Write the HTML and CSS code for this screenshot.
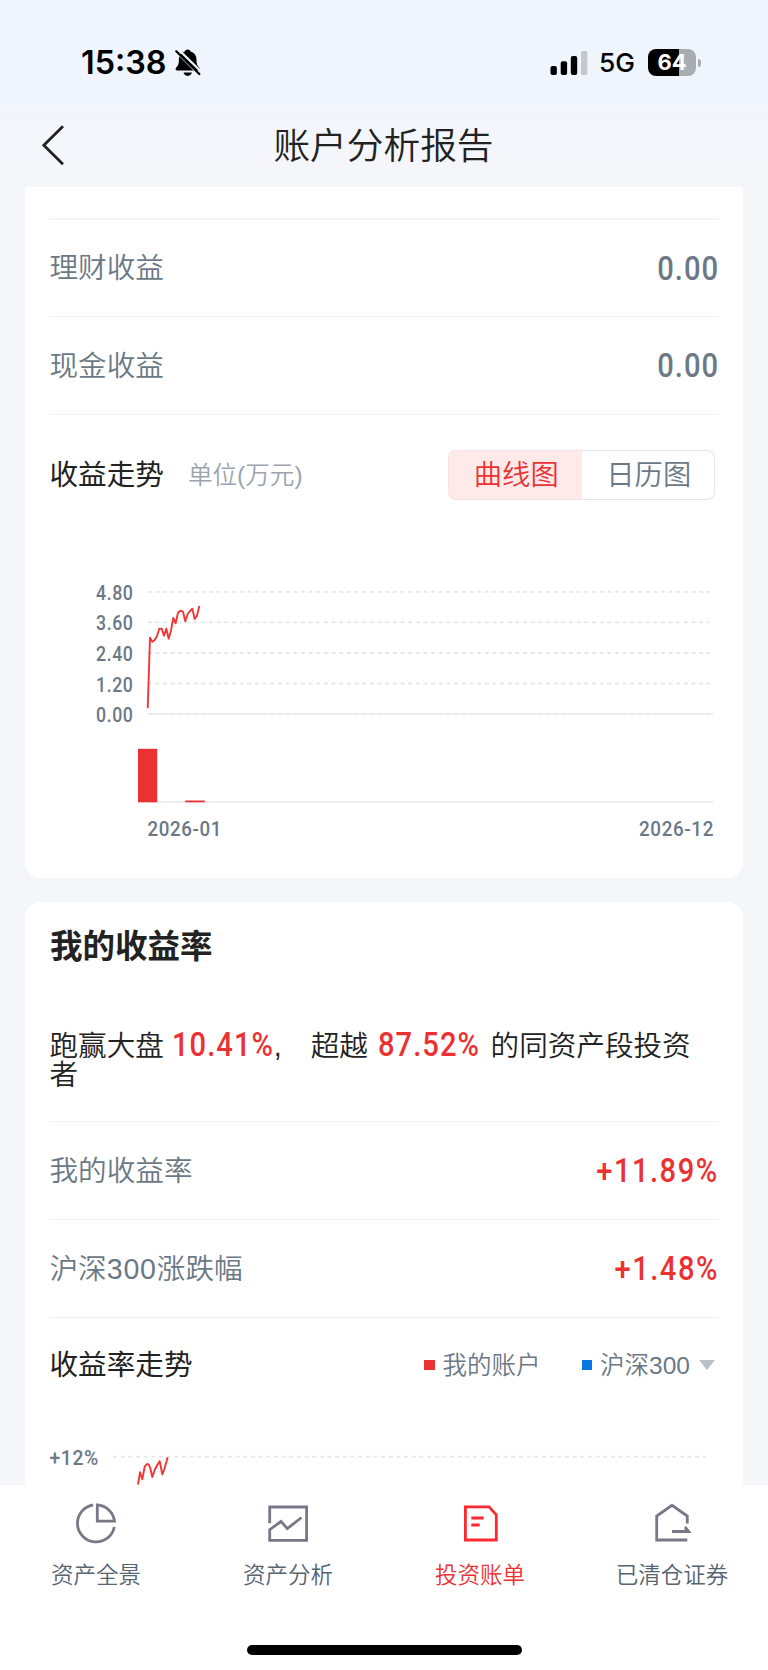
FILE: index.html
```html
<!DOCTYPE html>
<html lang="zh-CN">
<head>
  <meta charset="UTF-8">
  <meta name="viewport" content="width=device-width, initial-scale=1.0">
  <title>账户分析报告</title>
  <link rel="stylesheet" href="styles.css">
</head>
<body>
  <div class="status-bar">
    <span class="time">15:38</span>
    <svg class="bell" width="26" height="28" viewBox="0 0 26 28">
      <path d="M12.7 .5c1.500 0 2.600.8 2.900 2 3.800 1.100 5.900 4.200 5.900 8.200 0 4.800 1.200 6.200 2.800 8 .9 1.100.6 2.900-1.200 2.900H2.300c-1.800 0-2.200-1.700-1.200-2.900 1.600-1.800 2.800-3.200 2.800-8 0-4 2.100-7.100 5.900-8.200.3-1.200 1.400-2 2.900-2z"/>
      <path d="M8.500 23.600h8.400c-.5 2-2.100 3.300-4.200 3.300s-3.700-1.300-4.200-3.300z"/>
      <path class="bell-gap" d="M1 2.500L24.500 26M1.500 -1.500L27 23.500"/>
      <path class="bell-slash" d="M1.300 2.300L24.300 25"/>
    </svg>
    <svg class="signal" width="38" height="26" viewBox="0 0 38 26">
      <rect x="0.500" y="16" width="6.400" height="9" rx="2"/>
      <rect x="10.700" y="11.300" width="6.400" height="13.700" rx="2"/>
      <rect x="20.800" y="6" width="6.400" height="19" rx="2"/>
      <rect x="31" y="1" width="6.400" height="24" rx="2" fill="#c3c7ce"/>
    </svg>
    <span class="network">5G</span>
    <span class="battery">64</span>
    <span class="battery-cap"></span>
  </div>

  <header class="header">
    <svg class="back" width="24" height="42" viewBox="0 0 24 42">
      <path d="M22 1.200L2.800 20.200l19.200 19"/>
    </svg>
    <h1>账户分析报告</h1>
  </header>

  <main class="content">
    <section class="card card-top">
      <div class="row row-cut"></div>
      <div class="row row-short">
        <span class="label">理财收益</span>
        <span class="num">0.00</span>
      </div>
      <div class="row">
        <span class="label">现金收益</span>
        <span class="num">0.00</span>
      </div>
      <div class="trend-head">
        <h3>收益走势</h3>
        <span class="unit">单位(万元)</span>
        <div class="tabs">
          <span class="tab active">曲线图</span>
          <span class="tab">日历图</span>
        </div>
      </div>
      <svg class="chart" width="670" height="280" viewBox="0 0 670 280">
        <!-- grid -->
        <g class="grid">
          <path d="M99.700 21.800H662M99.700 52.300H662M99.700 83H662M99.700 113.500H662M99.700 144H662"/>
        </g>
        <path class="axis" d="M99.700 144H665.500M99.700 231.900H665.500"/>
        <g class="axis-text">
          <text x="48" y="29.700" textLength="37.500" lengthAdjust="spacingAndGlyphs">4.80</text>
          <text x="48" y="60.300" textLength="37.500" lengthAdjust="spacingAndGlyphs">3.60</text>
          <text x="48" y="91" textLength="37.500" lengthAdjust="spacingAndGlyphs">2.40</text>
          <text x="48" y="121.700" textLength="37.500" lengthAdjust="spacingAndGlyphs">1.20</text>
          <text x="48" y="152.300" textLength="37.500" lengthAdjust="spacingAndGlyphs">0.00</text>
          <text x="99.500" y="266" textLength="74.500" lengthAdjust="spacingAndGlyphs">2026-01</text>
          <text x="591" y="266" textLength="75" lengthAdjust="spacingAndGlyphs">2026-12</text>
        </g>
        <!-- profit curve -->
        <polyline class="line" points="99.7,138.3 102,67.7 104.3,71.7 106.7,70 109,66 111.3,58.7 113.7,58.7 116,65.7 118.3,58.7 120.7,68.7 123,60.7 125.3,48 127.7,53.3 130,42.7 132.3,40.7 135,41.7 137.3,51.3 139.7,44 142,41 144.3,38.7 146.7,49 149,45.7 151.3,36"/>
        <!-- monthly bars -->
        <rect class="bar" x="90" y="178.800" width="19.200" height="53.500"/>
        <rect class="bar" x="137.200" y="230.500" width="19.500" height="1.800"/>
      </svg>
    </section>

    <section class="card card-rate">
      <h2>我的收益率</h2>
      <p class="summary">跑赢大盘 <span class="num s1">10.41%</span>,<span class="gap"></span>超越 <span class="num s2">87.52%</span> 的同资产段投资者</p>
      <div class="row">
        <span class="label">我的收益率</span>
        <span class="num red">+11.89%</span>
      </div>
      <div class="row">
        <span class="label">沪深<span class="digits">300</span>涨跌幅</span>
        <span class="num red">+1.48%</span>
      </div>
      <div class="rate-head">
        <h3>收益率走势</h3>
        <div class="legend">
          <i class="dot"></i><span>我的账户</span>
          <i class="dot blue"></i><span>沪深300</span>
          <i class="arrow"></i>
        </div>
      </div>
      <svg class="chart" width="670" height="60" viewBox="0 0 670 60">
        <path class="grid" d="M65 16.700H658"/>
        <g class="axis-text"><text x="1.500" y="24.700" textLength="49.500" lengthAdjust="spacingAndGlyphs">+12%</text></g>
        <polyline class="line" points="90,44.500 92,32.300 94.300,39.300 96.700,26.700 99,24 101,24.700 102.300,28.300 104.300,37 106.700,30 109.300,25 111.700,21.300 114.300,34.300 116.300,29.300 119.700,17.300"/>
      </svg>
    </section>
  </main>

  <nav class="tabbar">
    <div class="items">
      <a class="item">
        <svg width="48" height="48" viewBox="0 0 48 48">
          <path d="M21 6A18.600 18.600 0 1 0 42.300 28"/>
          <path d="M25.300 5.900V22.200H42.500A18.600 18.600 0 0 0 25.300 5.900z"/>
        </svg>
        <span>资产全景</span>
      </a>
      <a class="item">
        <svg width="48" height="48" viewBox="0 0 48 48">
          <path d="M5.700 24.300V8H42.600V41.300H5.700V30.700L17 22.500L23.300 29.600L37.500 18.500"/>
        </svg>
        <span>资产分析</span>
      </a>
      <a class="item active">
        <svg width="48" height="48" viewBox="0 0 48 48">
          <path d="M9.400 7.800H33L40.300 15.800V41H9.400z"/>
          <path d="M15.300 19H27.700M15.300 26H23.700"/>
        </svg>
        <span>投资账单</span>
      </a>
      <a class="item">
        <svg width="48" height="48" viewBox="0 0 48 48">
          <path d="M39.300 41H8.700V17L24 6.300L39.300 17V24.500"/>
          <path class="solid" d="M24 31H36.500V27.500H38.500L43.500 34H24z"/>
        </svg>
        <span>已清仓证券</span>
      </a>
    </div>
    <div class="home-indicator"></div>
  </nav>
</body>
</html>
```
FILE: styles.css
```css
* {
  box-sizing: border-box;
}

body {
  margin: 0;
  height: 1670px;
  display: flex;
  flex-direction: column;
  overflow: hidden;
  font-family: "Liberation Sans", "Noto Sans CJK SC", sans-serif;
  font-weight: 350;
  color: #222;
  background: linear-gradient(#eef5ff 0, #f0f5fd 80px, #f4f6fb 150px, #f4f6fa 190px);
}

h1, h2, h3, p {
  margin: 0;
}

/* status bar */
.status-bar {
  flex: none;
  height: 104px;
  padding: 21px 67px 0 81px;
  display: flex;
  align-items: center;
  font-family: Inter, sans-serif;
  color: #000;
}

.time {
  font-size: 32.300px;
  font-weight: 600;
  width: 94px;
}

.bell-gap {
  fill: none;
  stroke: #f0f5fd;
  stroke-width: 2.2;
}

.bell-slash {
  stroke: #000;
  stroke-width: 2.2;
  stroke-linecap: round;
}

.signal {
  margin-left: auto;
}

.network {
  font-size: 26.300px;
  font-weight: 500;
  margin-left: 11px;
  width: 49px;
}

.battery {
  width: 48px;
  height: 27px;
  line-height: 27px;
  border-radius: 8px;
  background: linear-gradient(90deg, #000 31px, #a9acb1 31px);
  color: #fff;
  font-size: 22px;
  font-weight: 700;
  text-align: center;
}

.battery-cap {
  width: 3px;
  height: 8px;
  margin-left: 2px;
  border-radius: 0 4px 4px 0;
  background: #a9acb1;
}

/* header */
.header {
  flex: none;
  height: 83px;
  padding: 0 42px 0 41px;
  display: flex;
  align-items: center;
}

.back {
  fill: none;
  stroke: #222;
  stroke-width: 2.8;
}

h1 {
  flex: 1;
  margin-right: 24px;
  padding-top: 2px;
  text-align: center;
  font-size: 36.7px;
  line-height: 50px;
  font-weight: 350;
}

/* cards */
.content {
  flex: 1;
  min-height: 0;
  overflow: hidden;
  padding: 0 25px;
}

.card {
  background: #fff;
  border-radius: 16px;
  padding: 0 24px;
}

.card-top {
  height: 691px;
  border-radius: 0 0 16px 16px;
}

.card-rate {
  margin-top: 24px;
  height: 640px;
}

.row {
  height: 98px;
  display: flex;
  align-items: center;
  justify-content: space-between;
  border-bottom: 1px solid #eff0f1;
}

.row-cut {
  height: 33px;
  border-bottom: 2px solid #f4f5f6;
}

.row-short {
  height: 97px;
}

.row .num {
  padding-top: 1px;
  transform-origin: right;
}

.label {
  font-size: 28.600px;
  line-height: 40px;
  padding-left: 0.500px;
  color: #6b7885;
}

.digits {
  letter-spacing: 0.800px;
}

.num {
  display: inline-block;
  font-family: Roboto, sans-serif;
  font-size: 33.500px;
  font-weight: 500;
  line-height: 28px;
  letter-spacing: 1.200px;
  color: #6b7885;
  transform: scaleX(0.87);
  transform-origin: left;
}

.num.red, .summary .num {
  color: #ea3232;
}

.num.red {
  letter-spacing: 1.700px;
}

h3 {
  font-size: 28.600px;
  line-height: 40px;
  padding-left: 0.500px;
  font-weight: 400;
}

.trend-head {
  display: flex;
  align-items: center;
  height: 120px;
}

.unit {
  margin-left: 24px;
  padding-bottom: 4px;
  font-size: 24.600px;
  color: #9ca5af;
}

.tabs {
  display: flex;
  width: 267px;
  height: 50px;
  margin: 0 4px 0 auto;
}

.tab {
  flex: 1;
  padding-left: 2px;
  text-align: center;
  font-size: 28.300px;
  line-height: 48px;
  color: #6b7885;
  border: 1px solid #e3e5e7;
  border-left: 0;
  border-radius: 0 8px 8px 0;
}

.tab.active {
  color: #ea3232;
  background: #ffeaea;
  border: 1px solid #fde0e0;
  border-right: 0;
  border-radius: 8px 0 0 8px;
}

/* charts */
.chart {
  display: block;
  margin-left: -1px;
  overflow: visible;
}

.card-top .chart {
  margin-top: 35px;
}

.grid {
  fill: none;
  stroke: #e6e7e8;
  stroke-width: 1.800;
  stroke-dasharray: 4 3.660;
}

.axis {
  stroke: #e9eaeb;
  stroke-width: 1.500;
}

.axis-text {
  font-family: Roboto, sans-serif;
  font-size: 20.800px;
  font-weight: 500;
  letter-spacing: 0.700px;
  fill: #6b7885;
}

.line {
  fill: none;
  stroke: #f23535;
  stroke-width: 1.900;
  stroke-linejoin: round;
}

.bar {
  fill: #ea3232;
}

/* rate card */
h2 {
  height: 68px;
  padding: 21px 0 0 1px;
  font-size: 32.500px;
  line-height: 48px;
  font-weight: 700;
}

.summary {
  height: 152px;
  padding: 61px 10px 0 0.500px;
  font-size: 28.600px;
  line-height: 28.600px;
  border-bottom: 1px solid #eff0f1;
}

.s1 {
  margin-right: -15.500px;
}

.s2 {
  margin-left: 2px;
  margin-right: -12.500px;
}

.gap {
  display: inline-block;
  width: 29px;
}

.rate-head {
  height: 122px;
  padding: 0 4px 28px 0;
  display: flex;
  align-items: center;
  justify-content: space-between;
}

.legend {
  display: flex;
  align-items: center;
  font-size: 24.500px;
  color: #6b7885;
}

.legend span {
  margin-left: 8px;
  padding-bottom: 4px;
}

.dot {
  width: 10.500px;
  height: 10.500px;
  background: #ea3232;
}

.dot.blue {
  margin-left: 41px;
  background: #0878e0;
}

.arrow {
  margin-left: 9px;
  border: 8px solid transparent;
  border-top: 10px solid #b9bfc6;
  border-bottom: 0;
}

/* bottom tab bar */
.tabbar {
  flex: none;
  height: 185px;
  padding-top: 14px;
  background: #fff;
}

.items {
  display: grid;
  grid-template-columns: repeat(4, 1fr);
}

.item {
  display: flex;
  flex-direction: column;
  align-items: center;
  font-size: 22.500px;
  line-height: 32px;
  color: #566370;
}

.item span {
  margin-top: 13px;
}

.item svg {
  fill: none;
  stroke: #777986;
  stroke-width: 2.800;
}

.item .solid {
  fill: #777986;
  stroke: none;
}

.item.active {
  color: #ea3232;
}

.item.active svg {
  stroke: #fb2930;
}

.home-indicator {
  width: 275px;
  height: 10px;
  margin: 52.500px auto 0;
  border-radius: 5px;
  background: #000;
}
```
